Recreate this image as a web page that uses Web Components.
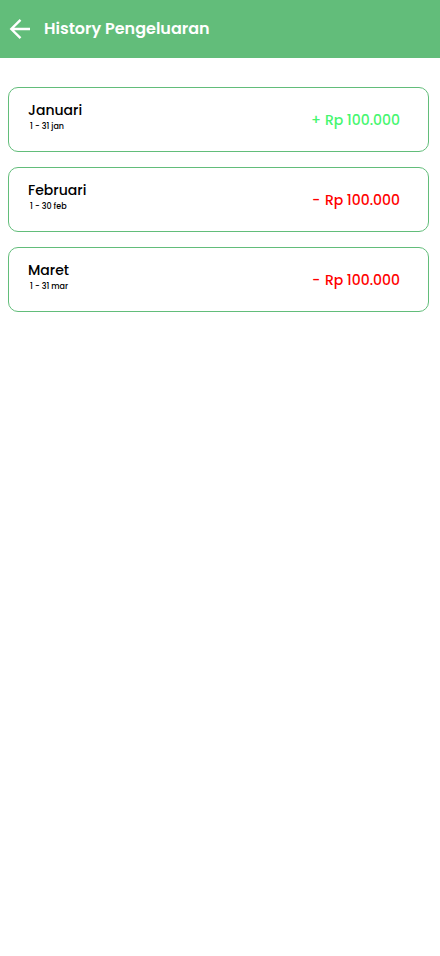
<!DOCTYPE html>
<html lang="id">
<head>
  <meta charset="UTF-8">
  <meta name="viewport" content="width=device-width, initial-scale=1.0">
  <title>History Pengeluaran</title>
  <style>
    body {
      margin: 0;
      background: #fff;
      color: #000;
      font-family: Poppins, Inter, sans-serif;
    }
  </style>
</head>
<body>
  <history-page>
    <page-header slot="header" href="#">History Pengeluaran</page-header>
    <history-card period="1 - 31 jan" amount="Rp 100.000" type="income">Januari</history-card>
    <history-card period="1 - 30 feb" amount="Rp 100.000" type="expense">Februari</history-card>
    <history-card period="1 - 31 mar" amount="Rp 100.000" type="expense">Maret</history-card>
  </history-page>

  <script>
    (function() {
      const pageTemplate = document.createElement('template');

      pageTemplate.innerHTML = `
        <style>
          :host {
            display: block;
          }
          main {
            display: flex;
            flex-direction: column;
            gap: 15px;
            padding: 29px 11px 29px 8px;
          }
        </style>
        <slot name="header"></slot>
        <main><slot></slot></main>
      `;

      class HistoryPage extends HTMLElement {
        constructor() {
          super();
          this.attachShadow({mode: 'open'});
          this.shadowRoot.appendChild(pageTemplate.content.cloneNode(true));
        }
      }
      window.customElements.define('history-page', HistoryPage);

      const headerTemplate = document.createElement('template');

      headerTemplate.innerHTML = `
        <style>
          :host {
            display: block;
            background: #62bd7a;
            color: #fff;
          }
          header {
            display: flex;
            align-items: center;
            gap: 12px;
            padding: 17px 8px;
          }
          a {
            display: flex;
            color: inherit;
          }
          h1 {
            margin: 0;
            font-size: 16px;
            font-weight: 600;
            line-height: 24px;
          }
        </style>
        <header>
          <a aria-label="Kembali">
            <svg width="24" height="24" viewBox="0 0 24 24" fill="none" stroke="currentColor" stroke-width="2.4">
              <path d="M22 12H4M12.5 2.8L3.3 12l9.2 9.2"/>
            </svg>
          </a>
          <h1><slot></slot></h1>
        </header>
      `;

      class PageHeader extends HTMLElement {
        constructor() {
          super();
          this.attachShadow({mode: 'open'});
          this.shadowRoot.appendChild(headerTemplate.content.cloneNode(true));
        }

        connectedCallback() {
          this.shadowRoot.querySelector('a').href = this.getAttribute('href') || '#';
        }
      }
      window.customElements.define('page-header', PageHeader);

      const cardTemplate = document.createElement('template');

      cardTemplate.innerHTML = `
        <style>
          :host {
            display: block;
            border: 1px solid #62bd7a;
            border-radius: 10px;
          }
          article {
            display: flex;
            align-items: center;
            justify-content: space-between;
            padding: 12px 28px 18px 19px;
          }
          h2 {
            margin: 0;
            font-size: 14px;
            font-weight: 500;
            line-height: 21px;
          }
          .period {
            margin: 0;
            padding-left: 2px;
            font-size: 8px;
            font-weight: 500;
            line-height: 12px;
          }
          .amount {
            display: flex;
            gap: 4px;
            padding-top: 8px;
            color: #ff0000;
            font-size: 14px;
            font-weight: 500;
            line-height: 21px;
          }
          .sign {
            min-width: 9px;
          }
          :host([type="income"]) .amount {
            color: #46f66f;
          }
        </style>
        <article>
          <div>
            <h2><slot></slot></h2>
            <p class="period"></p>
          </div>
          <div class="amount">
            <span class="sign"></span>
            <span class="value"></span>
          </div>
        </article>
      `;

      class HistoryCard extends HTMLElement {
        static get observedAttributes() {
          return ['period', 'amount', 'type'];
        }

        constructor() {
          super();
          this.attachShadow({mode: 'open'});
          this.shadowRoot.appendChild(cardTemplate.content.cloneNode(true));
        }

        attributeChangedCallback(name, oldValue, newValue) {
          switch (name) {
            case 'period':
              this.shadowRoot.querySelector('.period').textContent = newValue;
              break;
            case 'amount':
              this.shadowRoot.querySelector('.value').textContent = newValue;
              break;
            case 'type':
              this.shadowRoot.querySelector('.sign').textContent = newValue === 'income' ? '+' : '-';
              break;
          }
        }
      }
      window.customElements.define('history-card', HistoryCard);
    })();
  </script>
</body>
</html>
